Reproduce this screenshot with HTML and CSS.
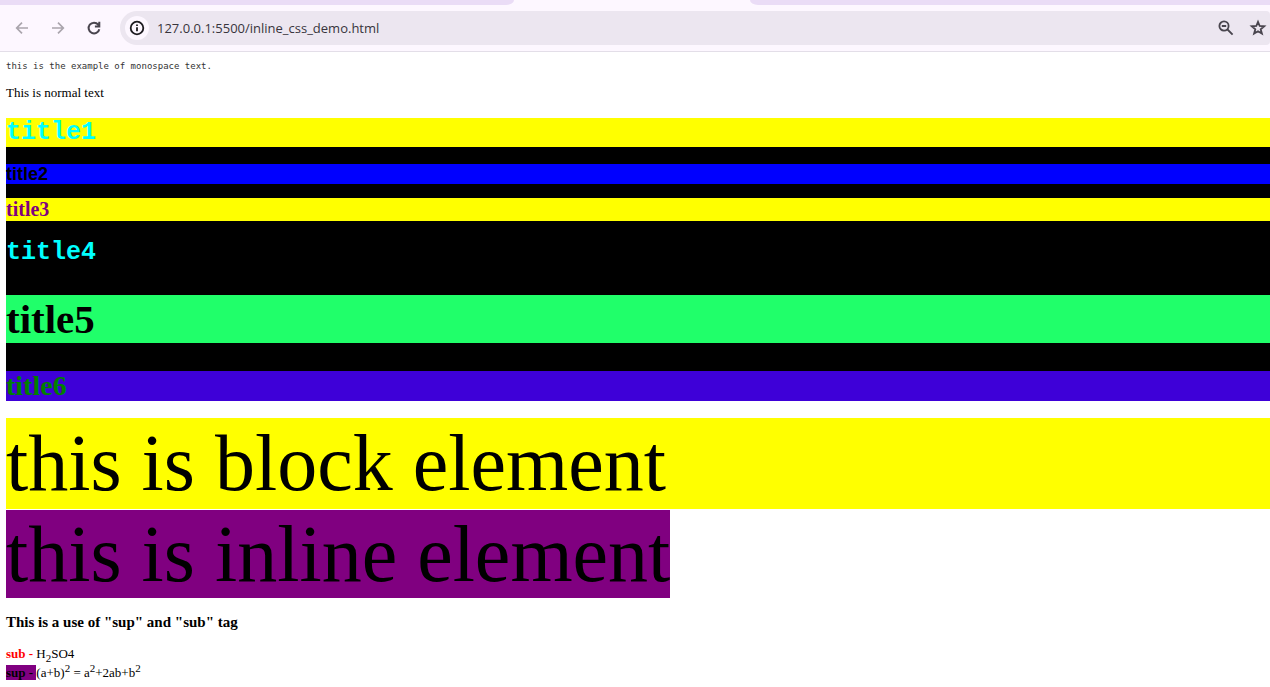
FILE: index.html
```html
<!DOCTYPE html>
<html lang="en">
<head>
<meta charset="utf-8">
<title>inline_css_demo.html</title>
<link rel="stylesheet" href="styles.css">
</head>
<body>
<header class="browser">
  <div class="tabs"><div class="tab-before"></div><div class="tab-active"></div><div class="tab-after"></div></div>
  <div class="toolbar">
    <button class="nav nav-off" type="button" aria-label="Back"><svg width="16" height="16" viewBox="0 0 16 16"><path d="M14 8H3M8 2.700 2.700 8 8 13.300"/></svg></button>
    <button class="nav nav-off" type="button" aria-label="Forward"><svg width="16" height="16" viewBox="0 0 16 16"><path d="M2 8h11M8 2.700 13.300 8 8 13.300"/></svg></button>
    <button class="nav" type="button" aria-label="Reload"><svg width="16" height="16" viewBox="0 0 16 16"><path d="M13.300 9.200A5.400 5.400 0 1 1 12.200 4.600L13.200 5.800M13.300 1.800v4.800H8.900"/></svg></button>
    <div class="omnibox">
      <button class="info" type="button" aria-label="Site information"><svg width="16" height="16" viewBox="0 0 16 16"><circle cx="8" cy="8" r="6.300"/><path d="M8 7.200v4M8 4.500v1.600"/></svg></button>
      <input class="url" type="text" aria-label="Address" value="127.0.0.1:5500/inline_css_demo.html">
      <button class="action" type="button" aria-label="Zoom"><svg width="18" height="18" viewBox="0 0 18 18"><circle cx="7" cy="7" r="4.600"/><path d="M10.500 10.500 15.600 15.600M4.800 7h4.400"/></svg></button>
      <button class="action" type="button" aria-label="Bookmark"><svg width="18" height="18" viewBox="0 0 18 18"><path d="M9 2.800 10.700 7 15.200 7.300 11.700 10.200 12.900 14.600 9 12.200 5.100 14.600 6.300 10.200 2.800 7.300 7.300 7Z"/></svg></button>
    </div>
  </div>
</header>
<main class="page">
  <p class="mono">this is the example of monospace text.</p>
  <p class="normal">This is normal text</p>
  <section class="titles">
    <h1 class="title courier yellow">title1</h1>
    <h2 class="title title2">title2</h2>
    <h3 class="title title3 yellow">title3</h3>
    <h4 class="title courier title4">title4</h4>
    <h5 class="title title5">title5</h5>
    <h6 class="title title6">title6</h6>
  </section>
  <div class="large large-block yellow">this is block element</div>
  <div class="large"><span class="purple">this is inline element</span></div>
  <h3 class="usage">This is a use of "sup" and "sub" tag</h3>
  <p class="formula"><b class="red">sub - </b>H<sub>2</sub>SO4</p>
  <p class="formula"><b class="purple">sup - </b>(a+b)<sup>2</sup> = a<sup>2</sup>+2ab+b<sup>2</sup></p>
</main>
</body>
</html>
```
FILE: styles.css
```css
* { box-sizing: border-box; }
body {
  margin: 0;
  background: #fff;
  color: #000;
  font: 13px/15px "Liberation Serif", serif;
}
button { border: 0; padding: 0; background: none; color: inherit; }
svg { display: block; fill: none; stroke: currentColor; stroke-width: 2; }

.browser { background: #fdf7ff; border-bottom: 1px solid #e3dee8; }
.tabs { display: flex; height: 5px; background: #fdf7ff; }
.tab-before, .tab-after { background: #eadcf6; }
.tab-before { width: 514px; border-bottom-right-radius: 8px 5px; }
.tab-active { width: 236px; }
.tab-after { flex: 1; border-bottom-left-radius: 8px 5px; }
.toolbar { display: flex; align-items: center; padding: 6px 0 6px 14px; }
.nav {
  display: flex;
  align-items: center;
  width: 36px;
  height: 34px;
  color: #49454e;
}
.nav-off { color: #aaa5ad; }
.nav-off svg { stroke-width: 1.7; }
.omnibox {
  display: flex;
  flex: 1;
  align-items: center;
  gap: 14px;
  min-width: 0;
  height: 34px;
  margin-left: -2px;
  padding: 0 3px 0 5px;
  border-radius: 17px 4px 4px 17px;
  background: #ece6f0;
  color: #49454e;
}
.info {
  display: grid;
  flex: none;
  place-items: center;
  width: 24px;
  height: 24px;
  border-radius: 50%;
  background: #fdf7ff;
  color: #1d1b20;
}
.info svg { stroke-width: 1.8; }
.url {
  flex: 1;
  min-width: 0;
  margin-left: -6px;
  padding: 0;
  border: 0;
  outline: 0;
  background: none;
  color: #38343c;
  font: 13px/20px "Open Sans", sans-serif;
}
.action svg { stroke-width: 1.8; }

.page { padding: 7px 0 6px 6px; }
.mono { margin: 0 0 11px; color: #333; font: 9px/15px "DejaVu Sans Mono", monospace; }
.normal { margin: 0 0 18px; }

.titles { background: #000; }
.title { margin: 0; }
.yellow { background: #ff0; }
.courier { color: #0ff; font: bold 25px/29px "Liberation Mono", monospace; }
.title2 {
  margin: 17px 0 14px;
  background: #00f;
  color: #000;
  font: bold 18px/20px "Liberation Sans", sans-serif;
}
.title3 { margin-bottom: 17px; color: #800080; font-size: 20px; line-height: 23px; }
.title5 { margin: 28px 0; background: #20ff6a; font-size: 41px; line-height: 48px; }
.title6 { background: #3e00d8; color: #008000; font-size: 28px; line-height: 30px; }

.large { font-size: 80px; line-height: 90px; }
.large-block { margin-top: 17px; line-height: 91px; }
.purple { background: #800080; }
.red { color: #f00; }
.usage { margin: 15px 0 13px; font-size: 15px; line-height: 17px; }
.formula { margin: 0; line-height: 19px; }
sub, sup { font-size: 11px; line-height: 0; }
```
